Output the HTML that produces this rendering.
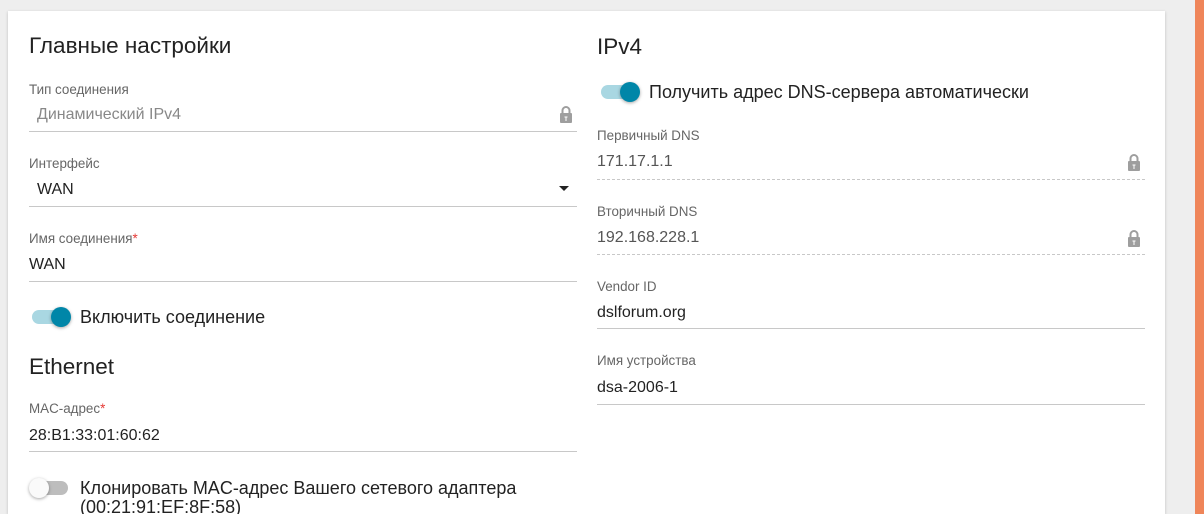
<!DOCTYPE html>
<html style="overflow:hidden"><head><meta charset="utf-8"><style>
html,body{overflow:hidden}
body{margin:0;width:1204px;height:514px;background:#eeeeee;font-family:"Liberation Sans","DejaVu Sans",sans-serif;color:#222;position:relative}
.card{position:absolute;left:8px;top:11px;width:1157px;height:503px;background:#fff;box-shadow:0 1px 3px rgba(0,0,0,.2)}
.orange{position:absolute;left:1195px;top:0;width:9px;height:514px;background:#ef8559}
.a{position:absolute;white-space:nowrap}
.h{font-size:22.5px;color:#222}
.l{font-size:13.4px;color:#666}
.v{font-size:16px;color:#222}
.t{font-size:18px;color:#222}
.g{color:#888}
.line{position:absolute;height:1px;background:#c8c8c8}
.dash{position:absolute;height:0;border-top:1px dashed #c8c8c8}
.req{color:#e53935}
.tg{position:absolute;width:36px;height:14px;border-radius:7px;background:#a9d7e2}
.tg i{position:absolute;right:-3px;top:-3px;width:20px;height:20px;border-radius:50%;background:#0086a8;box-shadow:0 1px 3px rgba(0,0,0,.35)}
.tg.off{background:#bdbdbd}
.tg.off i{left:-3px;right:auto;background:#fafafa}
.lock{position:absolute;width:14px;height:18px}
</style></head><body>
<div class="card"></div>
<div class="orange"></div>

<div class="a h" style="left:29px;top:33px">Главные настройки</div>
<div class="a l" style="left:29px;top:82px">Тип соединения</div>
<div class="a v g" style="left:37px;top:106px">Динамический IPv4</div>
<svg class="lock" style="left:559px;top:105px" viewBox="0 0 14 18"><path d="M3.5 8V5.5a3.5 3.5 0 0 1 7 0V8" fill="none" stroke="#9e9e9e" stroke-width="2"/><rect x="1" y="8" width="12" height="10" rx="1" fill="#9e9e9e"/><path d="M5.5 12h3M7 12v4" stroke="#fff" stroke-width="1"/></svg>
<div class="line" style="left:29px;top:131px;width:548px"></div>

<div class="a l" style="left:29px;top:156px">Интерфейс</div>
<div class="a v" style="left:37px;top:181px">WAN</div>
<div class="a" style="left:559px;top:186px;width:0;height:0;border-left:5px solid transparent;border-right:5px solid transparent;border-top:5px solid #222"></div>
<div class="line" style="left:29px;top:206px;width:548px"></div>

<div class="a l" style="left:29px;top:231px">Имя соединения<span class="req">*</span></div>
<div class="a v" style="left:29px;top:256px">WAN</div>
<div class="line" style="left:29px;top:281px;width:548px"></div>

<div class="tg" style="left:32px;top:310px"><i></i></div>
<div class="a t" style="left:80px;top:307px">Включить соединение</div>

<div class="a h" style="left:29px;top:354px">Ethernet</div>
<div class="a l" style="left:29px;top:401px">MAC-адрес<span class="req">*</span></div>
<div class="a v" style="left:29px;top:427px">28:B1:33:01:60:62</div>
<div class="line" style="left:29px;top:451px;width:548px"></div>

<div class="tg off" style="left:32px;top:481px"><i></i></div>
<div class="a t" style="left:80px;top:479px;line-height:19px">Клонировать MAC-адрес Вашего сетевого адаптера<br>(00:21:91:EF:8F:58)</div>

<div class="a h" style="left:597px;top:34px">IPv4</div>
<div class="tg" style="left:601px;top:85px"><i></i></div>
<div class="a t" style="left:649px;top:82px">Получить адрес DNS-сервера автоматически</div>

<div class="a l" style="left:597px;top:128px">Первичный DNS</div>
<div class="a v" style="left:597px;top:153px;color:#555">171.17.1.1</div>
<svg class="lock" style="left:1127px;top:153px" viewBox="0 0 14 18"><path d="M3.5 8V5.5a3.5 3.5 0 0 1 7 0V8" fill="none" stroke="#9e9e9e" stroke-width="2"/><rect x="1" y="8" width="12" height="10" rx="1" fill="#9e9e9e"/><path d="M5.5 12h3M7 12v4" stroke="#fff" stroke-width="1"/></svg>
<div class="dash" style="left:597px;top:179px;width:548px"></div>

<div class="a l" style="left:597px;top:204px">Вторичный DNS</div>
<div class="a v" style="left:597px;top:229px;color:#555">192.168.228.1</div>
<svg class="lock" style="left:1127px;top:229px" viewBox="0 0 14 18"><path d="M3.5 8V5.5a3.5 3.5 0 0 1 7 0V8" fill="none" stroke="#9e9e9e" stroke-width="2"/><rect x="1" y="8" width="12" height="10" rx="1" fill="#9e9e9e"/><path d="M5.5 12h3M7 12v4" stroke="#fff" stroke-width="1"/></svg>
<div class="dash" style="left:597px;top:254px;width:548px"></div>

<div class="a l" style="left:597px;top:279px">Vendor ID</div>
<div class="a v" style="left:597px;top:304px">dslforum.org</div>
<div class="line" style="left:597px;top:328px;width:548px"></div>

<div class="a l" style="left:597px;top:353px">Имя устройства</div>
<div class="a v" style="left:597px;top:379px">dsa-2006-1</div>
<div class="line" style="left:597px;top:404px;width:548px"></div>
</body></html>
